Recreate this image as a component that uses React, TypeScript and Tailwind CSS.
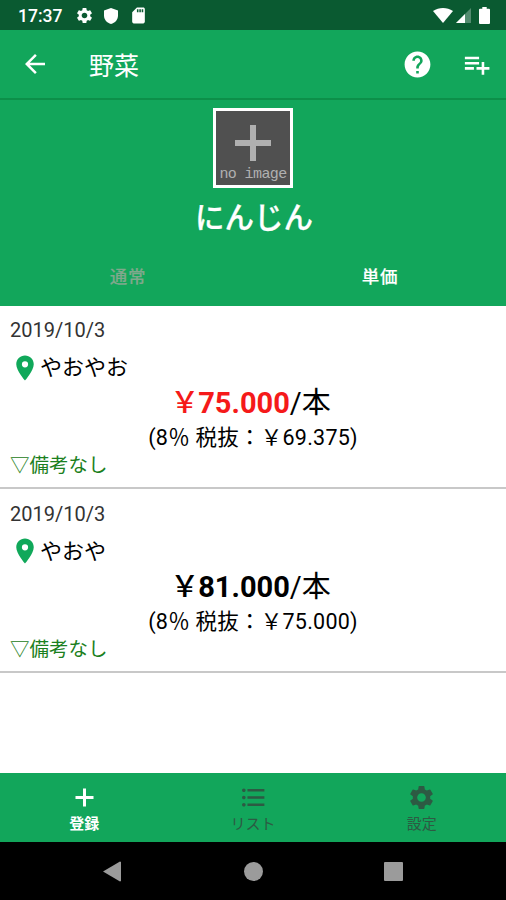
import { MdArrowBack, MdFormatListBulleted, MdHelp, MdPlace, MdPlaylistAdd, MdSdCard, MdSettings } from 'react-icons/md';

interface PriceRecord {
  date: string;
  shop: string;
  price: string;
  unit: string;
  taxNote: string;
  lowest: boolean;
}

const records: PriceRecord[] = [
  { date: '2019/10/3', shop: 'やおやお', price: '75.000', unit: '本', taxNote: '(8％ 税抜：￥69.375)', lowest: true },
  { date: '2019/10/3', shop: 'やおや', price: '81.000', unit: '本', taxNote: '(8％ 税抜：￥75.000)', lowest: false },
];

const PlusIcon = ({ className }: { className?: string }) => (
  <svg viewBox="0 0 29 29" className={className} fill="currentColor">
    <path d="M13 5.5h3V13h7.500v3H16v7.500h-3V16H5.500v-3H13Z" />
  </svg>
);

const navItems = [
  { label: '登録', icon: PlusIcon, active: true },
  { label: 'リスト', icon: MdFormatListBulleted, active: false },
  { label: '設定', icon: MdSettings, active: false },
];

const StatusBar = () => (
  <div className="flex h-[30px] shrink-0 items-center bg-[#0a5a31] pl-[18px] pr-[16px] pt-[1px] text-white">
    <span className="w-[44px] pt-[2px] text-[17.5px] font-medium leading-none">17:37</span>
    <MdSettings className="ml-[13px] size-[19px]" />
    <svg viewBox="0 0 14 16" className="ml-[10px] h-[16px] w-[14px] fill-current">
      <path d="M7 0 14 2.6V7.5C14 11.7 11 14.9 7 16 3 14.9 0 11.7 0 7.5V2.6Z" />
    </svg>
    <MdSdCard className="ml-[11px] size-[19px]" />
    <div className="ml-auto flex items-center">
      <svg viewBox="0 0 20 15" className="h-[15px] w-[20px] fill-current">
        <path d="M0 3C6-1 14-1 20 3L10 15Z" />
      </svg>
      <svg viewBox="0 0 15 15" className="ml-[3px] h-[15px] w-[15px] fill-current">
        <path d="M15 0V15H0Z" opacity="0.3" />
        <path d="M9 6V15H0Z" />
      </svg>
      <svg viewBox="0 0 11 17" className="ml-[8px] h-[17px] w-[11px] fill-current">
        <path d="M3.3 0h4.4v1.8H10a1 1 0 0 1 1 1V16a1 1 0 0 1-1 1H1a1 1 0 0 1-1-1V2.8a1 1 0 0 1 1-1h2.3Z" />
      </svg>
    </div>
  </div>
);

const AppBar = () => (
  <header className="flex h-[70px] shrink-0 items-center border-b-2 border-[#0c8f49] pl-[20px] pr-[14px] text-white">
    <MdArrowBack className="size-[30px]" />
    <h1 className="ml-[39px] pt-[4px] text-[25px] leading-none">野菜</h1>
    <MdHelp className="ml-auto size-[31px]" />
    <MdPlaylistAdd className="ml-[28px] size-[31px]" />
  </header>
);

const ItemHeader = () => (
  <section className="flex h-[205.5px] shrink-0 flex-col items-center pt-[8px]">
    <div className="flex h-[80px] w-[80px] flex-col items-center border-[3px] border-white bg-[#505050] pt-[14px] text-[#b0b0b0]">
      <svg viewBox="0 0 36 36" className="size-[36px] shrink-0 fill-current">
        <path d="M15 0h6v15h15v6H21v15h-6V21H0v-6h15Z" />
      </svg>
      <span className="mt-[7px] whitespace-nowrap font-['Liberation_Mono'] text-[15px] leading-[14px] tracking-[-0.6px]">no image</span>
    </div>
    <h2 className="mt-[12px] pl-[2px] text-[29.5px] font-medium leading-[36px] text-white [-webkit-text-stroke:0.3px]">にんじん</h2>
    <div className="mt-[28px] flex w-full pl-[2px] text-center text-[17.5px] font-medium leading-[26px] tracking-[0.8px] [-webkit-text-stroke:0.15px]">
      <span className="flex-1 text-[#7fa88c]">通常</span>
      <span className="flex-1 text-white">単価</span>
    </div>
  </section>
);

const RecordCard = ({ record }: { record: PriceRecord }) => (
  <article className="flex h-[183.5px] shrink-0 flex-col border-b-2 border-[#c8c8c8] px-[10px] pt-[11.5px] text-black">
    <p className="text-[20px] leading-[26px] text-[#333]">{record.date}</p>
    <div className="mt-[9px] flex items-center">
      <MdPlace className="size-[30px] text-[#10a85a]" />
      <span className="pt-px text-[22px] leading-[30px]">{record.shop}</span>
    </div>
    <div className="mt-px pr-[5px] text-center text-[29px] leading-[38px]">
      <span className={record.lowest ? 'font-bold text-[#f51a1a]' : 'font-bold'}>
        <span className="-mr-px font-medium">￥</span>
        {record.price}
      </span>
      /{record.unit}
    </div>
    <p className="pt-px text-center text-[21.5px] leading-[30px] tracking-[0.25px]">{record.taxNote}</p>
    <p className="text-[19.5px] leading-[26px] text-[#1b8020]">▽備考なし</p>
  </article>
);

const BottomNav = () => (
  <nav className="flex h-[69.5px] shrink-0 bg-[#12a65b]">
    {navItems.map((item) => (
      <div
        key={item.label}
        className={`flex flex-1 flex-col items-center pt-[10px] ${item.active ? 'font-bold text-white' : 'text-[#2d5a43]'}`}
      >
        <item.icon className="size-[29px]" />
        <span className="text-[15px] leading-[24px]">{item.label}</span>
      </div>
    ))}
  </nav>
);

const SystemNav = () => (
  <div className="flex h-[58px] shrink-0 items-center justify-between bg-black px-[103px] text-[#9b9b9b]">
    <svg viewBox="0 0 18 21" className="h-[21px] w-[18px] fill-current">
      <path d="M17 0.5 18 1V20L17 20.5 0 10.5Z" />
    </svg>
    <div className="ml-px size-[19px] rounded-full bg-current" />
    <div className="size-[19px] rounded-[1px] bg-current" />
  </div>
);

export default function App() {
  return (
    <div className="flex h-[900px] w-[506px] flex-col overflow-hidden bg-white font-[Roboto,'Noto_Sans_CJK_JP',sans-serif]" lang="ja">
      <StatusBar />
      <div className="shrink-0 bg-[#12a65b]">
        <AppBar />
        <ItemHeader />
      </div>
      <main className="min-h-0 flex-1">
        {records.map((record) => (
          <RecordCard key={record.shop} record={record} />
        ))}
      </main>
      <BottomNav />
      <SystemNav />
    </div>
  );
}
